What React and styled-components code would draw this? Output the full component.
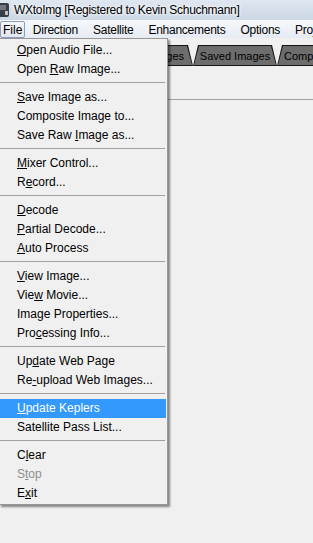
import React from 'react';
import styled, { createGlobalStyle } from 'styled-components';

const GlobalStyle = createGlobalStyle`
  html, body { margin: 0; padding: 0; background: #f0f0f0; }
  body {
    font-family: "Liberation Sans", Arial, sans-serif;
    font-size: 12px;
    color: #000;
  }
`;

const Window = styled.div`
  position: relative;
  width: 313px;
  height: 543px;
  overflow: hidden;
  display: flex;
  flex-direction: column;
  background: #f0f0f0;
`;

const TitleBar = styled.div`
  height: 20px;
  display: flex;
  align-items: center;
  gap: 4px;
  white-space: nowrap;
  background: linear-gradient(#dfe7f0, #cbd7e5);
`;

const TitleText = styled.span`
  font-size: 12px;
  letter-spacing: -0.3px;
  line-height: 20px;
  color: #000;
  text-shadow: 0 0 5px #fff, 0 0 3px #fff;
`;

const MenuBar = styled.div`
  height: 18px;
  display: flex;
  align-items: center;
  white-space: nowrap;
  overflow: hidden;
  background: linear-gradient(#f6f8fc, #e6ebf3);
`;

const MenuBarItem = styled.div`
  flex: none;
  height: 17px;
  line-height: 16px;
  letter-spacing: ${({ $open }) => ($open ? '0' : '-0.25px')};
  padding: ${({ $open }) => ($open ? '0 2px 0 2px' : '0 6.5px')};
  border: 1px solid ${({ $open }) => ($open ? '#8c9db7' : 'transparent')};
  border-radius: 2px;
  background: ${({ $open }) => ($open ? 'linear-gradient(#f4f6fa, #e2e7ef)' : 'transparent')};
  box-sizing: border-box;
`;

const Body = styled.div`
  flex: 1;
  display: flex;
  flex-direction: column;
  padding-top: 7px;
`;

const TabStrip = styled.div`
  display: flex;
  height: 21px;
  white-space: nowrap;
`;

const Tab = styled.div`
  flex: none;
  width: ${({ $w }) => $w}px;
  height: 21px;
  background: #141414;
  clip-path: polygon(5px 0, calc(100% - 5px) 0, 100% 100%, 0 100%);
`;

const TabFace = styled.div`
  height: 19px;
  margin: 1px 1px 0;
  background: #6d6d6d;
  clip-path: polygon(5px 0, calc(100% - 5px) 0, 100% 100%, 0 100%);
  display: flex;
  align-items: center;
  justify-content: ${({ $align }) => $align || 'center'};
  padding: 0 ${({ $pad }) => $pad || 0}px;
  font-size: 11px;
  color: #000;
  overflow: hidden;
`;

const Panel = styled.div`
  margin-top: 33px;
  border-top: 1px solid #a0a0a0;
  flex: 1;
`;

const Dropdown = styled.div`
  position: absolute;
  top: 38px;
  left: -1px;
  width: 169px;
  box-sizing: border-box;
  padding: 2px 1px 1px 0;
  background: #f0f0f0;
  border: 1px solid #979797;
  box-shadow: 2px 2px 2px rgba(0, 0, 0, 0.45);
  z-index: 10;
`;

const Item = styled.div`
  height: 19px;
  line-height: 19px;
  padding-left: 17px;
  white-space: nowrap;
  color: ${({ $selected, $disabled }) => ($selected ? '#fff' : $disabled ? '#8d8d8d' : '#000')};
  background: ${({ $selected }) => ($selected ? '#3399ff' : 'transparent')};
`;

const Separator = styled.div`
  height: 9px;
  display: flex;
  flex-direction: column;
  padding-top: 3px;
  box-sizing: border-box;

  &::before {
    content: '';
    height: 1px;
    margin-right: 1px;
    background: #a0a0a0;
  }
`;

const Mnemonic = styled.span`
  text-decoration: underline;
  text-underline-offset: 1px;
`;

const AppIcon = () => (
  <svg width="10" height="16" viewBox="0 0 10 16">
    <rect x="-4" y="1" width="13" height="14" rx="2" fill="#3a3d42" />
    <rect x="-2" y="3" width="8" height="5" fill="#6f7680" />
    <rect x="5" y="9" width="3" height="4" fill="#b9c3cf" />
  </svg>
);

const menu = [
  '&Open Audio File...',
  'Open &Raw Image...',
  '-',
  '&Save Image as...',
  'Composite Image to...',
  'Save Raw &Image as...',
  '-',
  '&Mixer Control...',
  'R&ecord...',
  '-',
  '&Decode',
  '&Partial Decode...',
  '&Auto Process',
  '-',
  '&View Image...',
  'Vie&w Movie...',
  'Ima&ge Properties...',
  'Pro&cessing Info...',
  '-',
  'Up&date Web Page',
  'Re&-upload Web Images...',
  '-',
  '&Update Keplers',
  'Satellite Pass List...',
  '-',
  'C&lear',
  'S&top',
  'E&xit',
];

const Label = ({ text }) => {
  const i = text.indexOf('&');
  if (i < 0) return text;
  return (
    <>
      {text.slice(0, i)}
      <Mnemonic>{text[i + 1]}</Mnemonic>
      {text.slice(i + 2)}
    </>
  );
};

export default function App() {
  return (
    <Window>
      <GlobalStyle />
      <TitleBar>
        <AppIcon />
        <TitleText>WXtoImg [Registered to Kevin Schuchmann]</TitleText>
      </TitleBar>
      <MenuBar>
        <MenuBarItem $open>File</MenuBarItem>
        <MenuBarItem>Direction</MenuBarItem>
        <MenuBarItem>Satellite</MenuBarItem>
        <MenuBarItem>Enhancements</MenuBarItem>
        <MenuBarItem>Options</MenuBarItem>
        <MenuBarItem>Projection</MenuBarItem>
      </MenuBar>
      <Body>
        <TabStrip>
          <Tab $w={193}>
            <TabFace $align="flex-end" $pad={8}>Images</TabFace>
          </Tab>
          <Tab $w={84}>
            <TabFace>Saved Images</TabFace>
          </Tab>
          <Tab $w={130}>
            <TabFace $align="flex-start" $pad={6}>Composite Images</TabFace>
          </Tab>
        </TabStrip>
        <Panel />
      </Body>
      <Dropdown>
        {menu.map((m, i) =>
          m === '-' ? (
            <Separator key={i} />
          ) : (
            <Item key={i} $selected={m === '&Update Keplers'} $disabled={m === 'S&top'}>
              <Label text={m} />
            </Item>
          )
        )}
      </Dropdown>
    </Window>
  );
}
